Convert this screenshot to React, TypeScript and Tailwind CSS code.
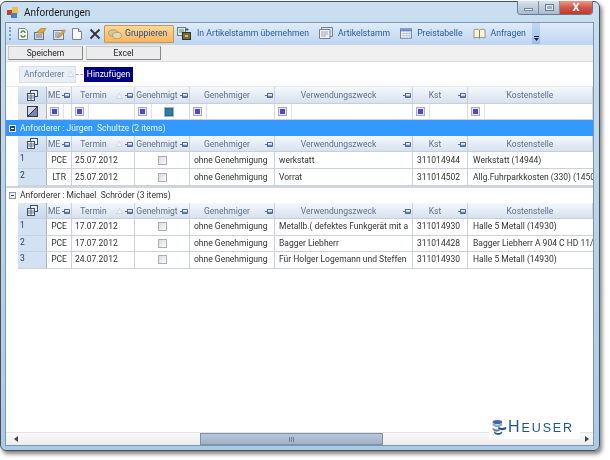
import React from "react";

const tpl = "grid grid-cols-[29px_25px_63px_55px_85px_138px_55px_125px]";
const heads = ["ME", "Termin", "Genehmigt", "Genehmiger", "Verwendungszweck", "Kst", "Kostenstelle"];
const pins = [true, true, true, true, true, true, false];

function Pin() {
  return (
    <svg width="8" height="7" viewBox="0 0 8 7" className="shrink-0">
      <path d="M0 3.5H2.5M2.5 1V6M2.5 1.5H7.5V5.5H2.5M2.5 4.3H7.5" stroke="#4f6a9c" strokeWidth="1" fill="none" />
    </svg>
  );
}
function Sort() {
  return (
    <svg width="7" height="6" viewBox="0 0 7 6" className="shrink-0">
      <path d="M3.5 0.5L6.5 5.5H0.5Z" fill="#f4f6fa" stroke="#c7cdd6" strokeWidth="0.7" />
    </svg>
  );
}
function Chooser() {
  return (
    <svg width="11" height="11" viewBox="0 0 11 11">
      <rect x="3.5" y="0.5" width="7" height="6" fill="#e9eefa" stroke="#3c4f70" />
      <rect x="0.5" y="3.5" width="7" height="7" fill="#fff" stroke="#3c4f70" />
      <path d="M1 6H7M1 8H7M4 4V10" stroke="#3c4f70" strokeWidth="0.8" />
    </svg>
  );
}
function FilterX() {
  return (
    <svg width="11" height="11" viewBox="0 0 11 11">
      <rect x="0.5" y="0.5" width="10" height="10" fill="#cfd6e8" stroke="#343c58" />
      <path d="M1 10L10 1V10Z" fill="#7a86ab" />
      <path d="M1 10L10 1" stroke="#232a44" />
    </svg>
  );
}
function FilterBox() {
  return (
    <span className="w-[9px] h-[9px] border border-[#a9a9c8] bg-[#e8e8f4] flex items-center justify-center shrink-0">
      <span className="w-[5px] h-[5px] bg-[#4b4bc4]" />
    </span>
  );
}
function Check() {
  return <span className="w-[9px] h-[9px] border border-[#a9aeb6] bg-gradient-to-br from-[#d8dbe0] to-[#fbfbfb] block" />;
}

function HeaderCells() {
  return (
    <>
      <div className="bg-gradient-to-b from-[#dfe9f5] to-[#c8d8ec] border-r border-[#aab6c8] flex items-center justify-center">
        <Chooser />
      </div>
      {heads.map((h, i) => (
        <div
          key={h}
          className="bg-gradient-to-b from-[#f5f8fc] to-[#d8e1ee] border-r border-[#c9d2df] flex items-center gap-[2px] px-[1px] pt-px text-[#5c7190]"
        >
          <span className="flex-1 text-center whitespace-nowrap">{h}</span>
          {h === "Termin" && <Sort />}
          {pins[i] && <Pin />}
        </div>
      ))}
    </>
  );
}

function Row({ n, cells, tall }: { n: number; cells: string[]; tall?: boolean }) {
  return (
    <div className={`${tpl} ${tall ? "h-[17px]" : "h-[16.5px]"} border-b border-[#c9d2df] bg-white`}>
      <div className="bg-[#d3e2f2] border-r border-[#aab6c8] pl-[2px] pt-px text-[#2a3a50] leading-[11px]">{n}</div>
      <div className="border-r border-[#c9d2df] flex items-center justify-center">{cells[0]}</div>
      <div className="border-r border-[#c9d2df] flex items-center pl-[3px]">{cells[1]}</div>
      <div className="border-r border-[#c9d2df] flex items-center justify-center">
        <Check />
      </div>
      <div className="border-r border-[#c9d2df] flex items-center pl-[4px] whitespace-nowrap">ohne Genehmigung</div>
      <div className="border-r border-[#c9d2df] flex items-center pl-[4px] whitespace-nowrap overflow-hidden">{cells[2]}</div>
      <div className="border-r border-[#c9d2df] flex items-center pl-[4px]">{cells[3]}</div>
      <div className="flex items-center pl-[5px] whitespace-nowrap overflow-hidden">{cells[4]}</div>
    </div>
  );
}

function Expander() {
  return (
    <span className="w-[7px] h-[7px] border border-[#8a94a4] bg-[#eef1f5] flex items-center justify-center shrink-0">
      <span className="w-[3px] h-px bg-[#404a5a]" />
    </span>
  );
}

function ToolBtn({ icon, label, gap }: { icon: React.ReactNode; label: string; gap: string }) {
  return (
    <div className={`flex items-center shrink-0 whitespace-nowrap text-[#2a5a9e] text-[8.7px] ${gap}`}>
      {icon}
      <span>{label}</span>
    </div>
  );
}

function Disks() {
  return (
    <svg width="16" height="17" viewBox="0 0 20 22" className="shrink-0" preserveAspectRatio="none">
      <ellipse cx="8" cy="4" rx="6" ry="2.6" fill="#3f6a9e" />
      <path d="M2 5C4 8 12 8 14 5V8C12 11 4 11 2 8Z" fill="#8fa9c8" />
      <path d="M9 10C11 12 17 12 19 10V13C17 15 11 15 9 13Z" fill="#24518c" />
      <path d="M2 11C4 14 9 14 11 13V15C9 17 4 17 2 14Z" fill="#5e82ad" />
      <path d="M4 16C6 19 12 19 14 16V18C12 21 6 21 4 18Z" fill="#24518c" />
    </svg>
  );
}

export default function App() {
  return (
    <div className="w-[610px] h-[460px] bg-white overflow-hidden font-['Roboto',sans-serif] text-[8.5px] text-[#333] blur-[0.35px]">
      <div className="w-[600px] h-[450px] mt-px rounded-[6px] border border-[#4a5058] bg-gradient-to-b from-[#c9dff1] via-[#b7d3ea] to-[#a9cbe8] shadow-[2px_3px_4px_rgba(40,40,40,0.6)] flex flex-col pl-[4px] pr-[5px] pb-[4px]">
        {/* title bar */}
        <div className="h-[20px] flex items-start shrink-0">
          <div className="flex items-center gap-[5px] pt-[4px] pl-[2px] flex-1">
            <svg width="12" height="12" viewBox="0 0 12 12">
              <rect x="0" y="3" width="5" height="5" fill="#c8402c" />
              <rect x="5" y="0" width="6" height="6" fill="#f0c040" />
              <rect x="4" y="6" width="6" height="5" fill="#4a7fc8" />
            </svg>
            <span className="text-[10px] text-[#1a1a1a] leading-[13px]">Anforderungen</span>
          </div>
          <div className="flex h-[14px] w-[76px] mr-[1px] -mt-px border border-[#6b7a8a] border-t-0 rounded-b-[4px] overflow-hidden">
            <div className="w-[21px] bg-gradient-to-b from-[#d6e2ee] to-[#a9bccd] border-r border-[#7e8e9e] flex items-end justify-center pb-[3px]">
              <span className="w-[9px] h-[3px] bg-white border border-[#7a8696]" />
            </div>
            <div className="w-[21px] bg-gradient-to-b from-[#d6e2ee] to-[#a9bccd] border-r border-[#7e8e9e] flex items-center justify-center">
              <span className="w-[9px] h-[7px] border border-[#6e7a8a] bg-[#dfe7ef] flex items-center justify-center">
                <span className="w-[5px] h-[3px] bg-[#9fb0c2]" />
              </span>
            </div>
            <div className="flex-1 bg-gradient-to-b from-[#e89a8c] via-[#d0574a] to-[#c0392e] flex items-center justify-center text-white text-[11px] font-bold leading-none">
              X
            </div>
          </div>
        </div>

        {/* client */}
        <div className="flex-1 bg-white border border-[#7f94ad] flex flex-col relative overflow-hidden">
          {/* toolbar */}
          <div className="h-[22px] shrink-0 bg-gradient-to-b from-[#dfebf9] to-[#bed6f1] border-b border-[#c6d8ee] flex items-center">
            <div className="flex items-center h-full w-[526px] shrink-0 pl-[3px]">
              <span className="w-[2px] h-[13px] border-l-2 border-dotted border-[#7d9cc4] mr-[7px] shrink-0" />
              <div className="flex items-center gap-[6px] shrink-0">
                <svg width="10" height="12" viewBox="0 0 10 12">
                  <path d="M0.5 0.5H7L9.5 3V11.5H0.5Z" fill="#fff" stroke="#7c8894" />
                  <path d="M3 5A2 2 0 0 1 7 5M7 7A2 2 0 0 1 3 7" stroke="#3f9a3f" strokeWidth="1.3" fill="none" />
                </svg>
                <svg width="13" height="12" viewBox="0 0 13 12">
                  <rect x="0.5" y="4.5" width="9" height="7" fill="#d0d4da" stroke="#6a7280" />
                  <path d="M3 4L7 0.5H12L9 5H4Z" fill="#e8a830" stroke="#a07020" strokeWidth="0.6" />
                  <path d="M2 7H8M2 9H8" stroke="#7a8290" />
                </svg>
                <svg width="13" height="12" viewBox="0 0 13 12">
                  <rect x="0.5" y="2.5" width="10" height="9" fill="#dbe2ec" stroke="#6d7f99" />
                  <path d="M2 5H7M2 7H6M2 9H5" stroke="#7d8ea8" />
                  <path d="M5 8L11 1.5L12.5 3L7 9L4.5 9.5Z" fill="#e9a63a" stroke="#9c6a20" strokeWidth="0.5" />
                </svg>
                <svg width="10" height="12" viewBox="0 0 10 12">
                  <path d="M0.5 0.5H6.5L9.5 3.5V11.5H0.5Z" fill="#fff" stroke="#7c8490" />
                  <path d="M6.5 0.5V3.5H9.5" fill="#d8dce2" stroke="#7c8490" />
                </svg>
                <svg width="12" height="12" viewBox="0 0 12 12" className="ml-px">
                  <path d="M1.5 1.5L10.5 10.5M10.5 1.5L1.5 10.5" stroke="#303438" strokeWidth="1.8" />
                </svg>
              </div>
              <div className="ml-[3px] h-[18px] w-[70px] shrink-0 border border-[#c29a55] rounded-[1px] bg-gradient-to-b from-[#fcd79a] to-[#fbb45c] flex items-center gap-[3px] pl-[3px] text-[8.7px] text-[#1d4c86]">
                <svg width="14" height="10" viewBox="0 0 14 10" className="shrink-0">
                  <ellipse cx="5" cy="4" rx="4.5" ry="3.2" fill="#d6c894" stroke="#8f8350" strokeWidth="0.6" />
                  <ellipse cx="9" cy="6.5" rx="4.5" ry="3.2" fill="#e4dab0" stroke="#8f8350" strokeWidth="0.6" />
                </svg>
                <span>Gruppieren</span>
              </div>
              <div className="ml-[3px] flex items-center gap-[10px] shrink-0">
                <ToolBtn
                  label="In Artikelstamm übernehmen"
                  gap="gap-[6px]"
                  icon={
                    <svg width="14" height="13" viewBox="0 0 14 13">
                      <rect x="0.5" y="0.5" width="8" height="8" fill="#dfe6ec" stroke="#6e7a86" />
                      <path d="M2 3H7M2 5H7" stroke="#5f8f6a" />
                      <rect x="5.5" y="5.5" width="8" height="7" fill="#7a6a2e" stroke="#2c3340" />
                      <path d="M10 1V4M8.5 2.5H11.5" stroke="#33507a" />
                      <rect x="8" y="8" width="3" height="2" fill="#e0c040" />
                    </svg>
                  }
                />
                <ToolBtn
                  label="Artikelstamm"
                  gap="gap-[5px]"
                  icon={
                    <svg width="14" height="12" viewBox="0 0 14 12">
                      <path d="M2.5 0.5H13.5V9.5H2.5Z" fill="#dfe6ee" stroke="#74818f" />
                      <path d="M0.5 2.5H11V11.5H0.5Z" fill="#eef1f5" stroke="#74818f" />
                      <path d="M2 5H9M2 7H9M2 9H7" stroke="#9aa8b8" />
                    </svg>
                  }
                />
                <ToolBtn
                  label="Preistabelle"
                  gap="gap-[5px]"
                  icon={
                    <svg width="12" height="11" viewBox="0 0 14 12">
                      <rect x="0.5" y="0.5" width="13" height="11" fill="#f4f6fa" stroke="#66789a" />
                      <rect x="1" y="1" width="12" height="2.5" fill="#6f86c0" />
                      <path d="M4.5 3.5V11M8 3.5V11M11 3.5V11M1 6H13M1 8.5H13" stroke="#a4b2cc" strokeWidth="0.7" />
                    </svg>
                  }
                />
                <ToolBtn
                  label="Anfragen"
                  gap="gap-[5px]"
                  icon={
                    <svg width="13" height="11" viewBox="0 0 14 12">
                      <path d="M1 2C3 1 5.5 1 7 2.5C8.5 1 11 1 13 2V11C11 10 8.5 10 7 11C5.5 10 3 10 1 11Z" fill="#fbf4d8" stroke="#7c7456" strokeWidth="0.8" />
                      <path d="M7 2.5V11" stroke="#7c7456" />
                    </svg>
                  }
                />
              </div>
            </div>
            <div className="w-[8px] h-full bg-gradient-to-b from-[#c4d9f2] to-[#9dbde6] flex flex-col items-center justify-end pb-[3px] gap-px">
              <span className="w-[5px] h-px bg-[#1f2a3a]" />
              <svg width="5" height="3" viewBox="0 0 5 3">
                <path d="M0 0H5L2.5 3Z" fill="#1f2a3a" />
              </svg>
            </div>
          </div>

          {/* buttons row */}
          <div className="h-[17px] shrink-0 bg-[#f0f0f0] border-b border-[#d9dce0] flex items-center gap-[3px] pl-[2px]">
            {["Speichern", "Excel"].map((b) => (
              <div
                key={b}
                className="w-[75px] h-[14px] bg-[#ececec] border border-[#85888c] border-t-[#c8c8c8] border-l-[#c8c8c8] flex items-center justify-center text-[#222]"
              >
                {b}
              </div>
            ))}
          </div>

          {/* group panel */}
          <div className="h-[25px] shrink-0 bg-white border-b border-[#e4e8ee] flex items-center pl-[13px]">
            <div className="w-[57px] h-[17px] bg-[#e9eff7] border border-[#d8dfe9] flex items-center pl-[4px] gap-[3px] text-[#647a9a]">
              <span>Anforderer</span>
              <Sort />
            </div>
            <span className="w-[7px] border-t border-dashed border-[#d08a8a]" />
            <div className="w-[49px] h-[15px] bg-[#000080] text-white flex items-center justify-center ml-px">Hinzufügen</div>
          </div>

          {/* grid */}
          <div className="pl-[12px] shrink-0">
            <div className={`${tpl} h-[17px] border-b border-[#c5cfdd]`}>
              <HeaderCells />
            </div>
            <div className={`${tpl} h-[16px] bg-white border-b border-[#c9d2df]`}>
              <div className="bg-[#e6e9ee] border-r border-[#aab6c8] flex items-center justify-center">
                <FilterX />
              </div>
              {heads.map((h) => (
                <div key={h} className="border-r border-[#d4dbe5] flex items-center pl-[3px]">
                  <FilterBox />
                  <span className="w-px h-full bg-[#e0e4ea] ml-[4px]" />
                  {h === "Genehmigt" && (
                    <span className="w-[10px] h-[10px] border border-[#b0b4ba] bg-[#2a7fa8] ml-[12px] shadow-[inset_0_0_2px_#0c4a6a]" />
                  )}
                </div>
              ))}
            </div>
          </div>

          {/* group 1 */}
          <div className="h-[16px] shrink-0 bg-[#3399ff] flex items-center pl-[3px] gap-[3px] text-[#e8f2fd]">
            <span className="w-[7px] h-[7px] border border-[#dfe8f2] bg-[#3a4a5e] flex items-center justify-center">
              <span className="w-[3px] h-px bg-white" />
            </span>
            <span className="ml-[1px] whitespace-pre">Anforderer : Jürgen  Schultze (2 items)</span>
          </div>
          <div className="pl-[12px] shrink-0 border-b-2 border-[#d0d6de]">
            <div className={`${tpl} h-[16px] border-b border-[#c5cfdd]`}>
              <HeaderCells />
            </div>
            <Row tall n={1} cells={["PCE", "25.07.2012", "werkstatt", "311014944", "Werkstatt (14944)"]} />
            <Row tall n={2} cells={["LTR", "25.07.2012", "Vorrat", "311014502", "Allg.Fuhrparkkosten (330) (14502)"]} />
          </div>

          {/* group 2 */}
          <div className="h-[15px] shrink-0 bg-white flex items-center pl-[3px] gap-[3px] text-[#333]">
            <Expander />
            <span className="ml-[1px] whitespace-pre">Anforderer : Michael  Schröder (3 items)</span>
          </div>
          <div className="pl-[12px] shrink-0">
            <div className={`${tpl} h-[16px] border-b border-[#c5cfdd]`}>
              <HeaderCells />
            </div>
            <Row n={1} cells={["PCE", "17.07.2012", "Metallb.( defektes Funkgerät mit a", "311014930", "Halle 5 Metall (14930)"]} />
            <Row n={2} cells={["PCE", "17.07.2012", "Bagger Liebherr", "311014428", "Bagger Liebherr A 904 C HD 11/2007"]} />
            <Row n={3} cells={["PCE", "24.07.2012", "Für Holger Logemann und Steffen", "311014930", "Halle 5 Metall (14930)"]} />
          </div>

          <div className="flex-1" />

          {/* scrollbar */}
          <div className="h-[13px] shrink-0 bg-gradient-to-b from-[#fafafa] to-[#ececec] border-t border-[#e4e4e4] flex items-center">
            <div className="w-[12px] flex justify-end">
              <svg width="4" height="6" viewBox="0 0 4 6">
                <path d="M4 0V6L0 3Z" fill="#3c4654" />
              </svg>
            </div>
            <div className="ml-[182px] w-[183px] h-full bg-gradient-to-b from-[#b9c7db] to-[#9fb1ca] border border-[#7f90a8] flex items-center justify-center gap-px">
              <span className="w-px h-[5px] bg-[#6f7f96]" />
              <span className="w-px h-[5px] bg-[#6f7f96]" />
              <span className="w-px h-[5px] bg-[#6f7f96]" />
            </div>
            <div className="flex-1 flex justify-end pr-[4px]">
              <svg width="4" height="6" viewBox="0 0 4 6">
                <path d="M0 0V6L4 3Z" fill="#3c4654" />
              </svg>
            </div>
          </div>

          {/* logo overlay */}
          <div className="absolute right-[13px] bottom-[6px] w-[91px] h-[24px] bg-white flex items-center gap-px pl-[2px]">
            <Disks />
            <span className="font-['Liberation_Sans',sans-serif] text-[#1f5596] tracking-[1.9px] leading-none whitespace-nowrap">
              <span className="text-[16px]">H</span>
              <span className="text-[12.5px]">EUSER</span>
            </span>
          </div>
        </div>
      </div>
    </div>
  );
}
